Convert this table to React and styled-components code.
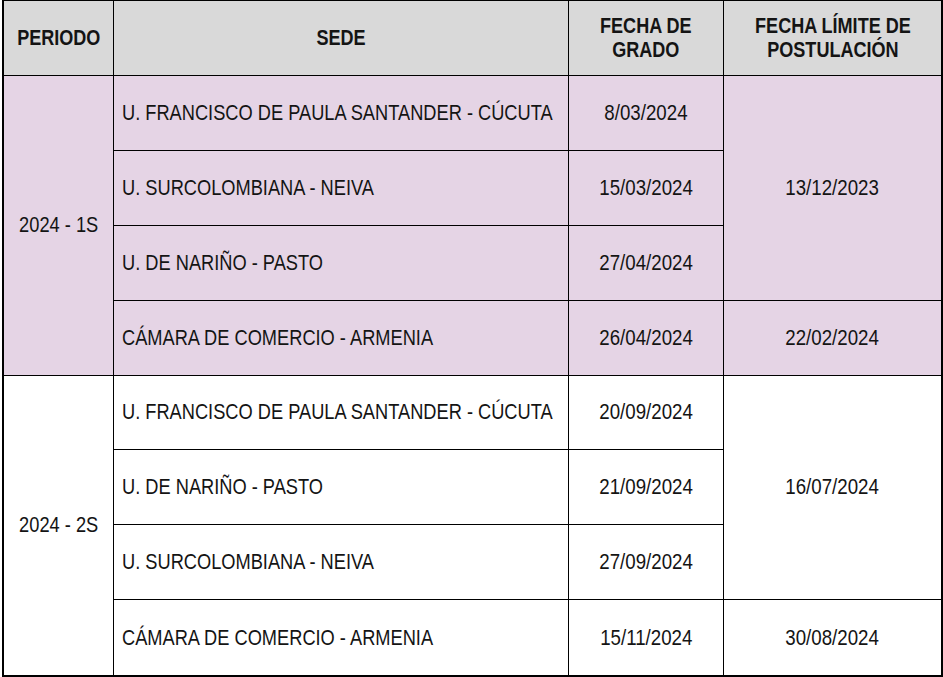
import React from "react";
import styled, { createGlobalStyle } from "styled-components";

const Global = createGlobalStyle`
  html, body { margin: 0; padding: 0; background: #ffffff; }
  body { font-family: "Liberation Sans", Arial, sans-serif; }
`;

const Table = styled.div`
  margin-left: 2px;
  width: 941px;
  height: 677px;
  box-sizing: border-box;
  border-top: 1px solid #000;
  border-left: 2px solid #000;
  border-right: 2px solid #000;
  border-bottom: 2px solid #000;
  display: grid;
  grid-template-columns: 110px 455px 155px 217px;
  grid-template-rows: 75px repeat(8, 1fr);
  color: #141414;
`;

const Cell = styled.div`
  box-sizing: border-box;
  display: flex;
  align-items: center;
  justify-content: ${(p) => (p.$left ? "flex-start" : "center")};
  padding: ${(p) => (p.$left ? "0 0 0 8px" : "0")};
  background: ${(p) => p.$bg};
  border-right: ${(p) => (p.$last ? "none" : "1px solid #000")};
  border-bottom: ${(p) => (p.$bottom ? "none" : "1px solid #000")};
  grid-column: ${(p) => p.$col};
  grid-row: ${(p) => `${p.$row} / span ${p.$span || 1}`};
  min-width: 0;
`;

const Text = styled.span`
  display: inline-block;
  white-space: nowrap;
  font-size: 22px;
  line-height: 24px;
  font-weight: ${(p) => (p.$head ? 700 : 400)};
  text-align: ${(p) => (p.$left ? "left" : "center")};
  transform: scaleX(${(p) => p.$scale || 0.85});
  transform-origin: ${(p) => (p.$left ? "left center" : "center center")};
`;

const GRAY = "#d9d9d9";
const PINK = "#e5d4e5";
const WHITE = "#ffffff";

const periods = [
  {
    name: "2024 - 1S",
    bg: PINK,
    rows: [
      ["U. FRANCISCO DE PAULA SANTANDER - CÚCUTA", "8/03/2024"],
      ["U. SURCOLOMBIANA - NEIVA", "15/03/2024"],
      ["U. DE NARIÑO - PASTO", "27/04/2024"],
      ["CÁMARA DE COMERCIO - ARMENIA", "26/04/2024"],
    ],
    limits: [
      ["13/12/2023", 3],
      ["22/02/2024", 1],
    ],
  },
  {
    name: "2024 - 2S",
    bg: WHITE,
    rows: [
      ["U. FRANCISCO DE PAULA SANTANDER - CÚCUTA", "20/09/2024"],
      ["U. DE NARIÑO - PASTO", "21/09/2024"],
      ["U. SURCOLOMBIANA - NEIVA", "27/09/2024"],
      ["CÁMARA DE COMERCIO - ARMENIA", "15/11/2024"],
    ],
    limits: [
      ["16/07/2024", 3],
      ["30/08/2024", 1],
    ],
  },
];

export default function App() {
  const cells = [];
  let rowStart = 2;
  periods.forEach((p, pi) => {
    const lastPeriod = pi === periods.length - 1;
    cells.push(
      <Cell key={`p${pi}`} $bg={p.bg} $col={1} $row={rowStart} $span={4} $bottom={lastPeriod}>
        <Text $scale={0.83}>{p.name}</Text>
      </Cell>
    );
    p.rows.forEach((r, ri) => {
      const isLast = lastPeriod && ri === p.rows.length - 1;
      cells.push(
        <Cell key={`s${pi}-${ri}`} $bg={p.bg} $col={2} $row={rowStart + ri} $left $bottom={isLast}>
          <Text $left $scale={0.829}>{r[0]}</Text>
        </Cell>,
        <Cell key={`d${pi}-${ri}`} $bg={p.bg} $col={3} $row={rowStart + ri} $bottom={isLast}>
          <Text>{r[1]}</Text>
        </Cell>
      );
    });
    let off = 0;
    p.limits.forEach((l, li) => {
      const isLast = lastPeriod && li === p.limits.length - 1;
      cells.push(
        <Cell
          key={`l${pi}-${li}`}
          $bg={p.bg}
          $col={4}
          $row={rowStart + off}
          $span={l[1]}
          $last
          $bottom={isLast}
        >
          <Text>{l[0]}</Text>
        </Cell>
      );
      off += l[1];
    });
    rowStart += 4;
  });

  return (
    <>
      <Global />
      <Table>
        <Cell $bg={GRAY} $col={1} $row={1}><Text $head $scale={0.82}>PERIODO</Text></Cell>
        <Cell $bg={GRAY} $col={2} $row={1}><Text $head $scale={0.82}>SEDE</Text></Cell>
        <Cell $bg={GRAY} $col={3} $row={1}><Text $head $scale={0.82}>FECHA DE<br />GRADO</Text></Cell>
        <Cell $bg={GRAY} $col={4} $row={1} $last><Text $head $scale={0.82}>FECHA LÍMITE DE<br />POSTULACIÓN</Text></Cell>
        {cells}
      </Table>
    </>
  );
}
